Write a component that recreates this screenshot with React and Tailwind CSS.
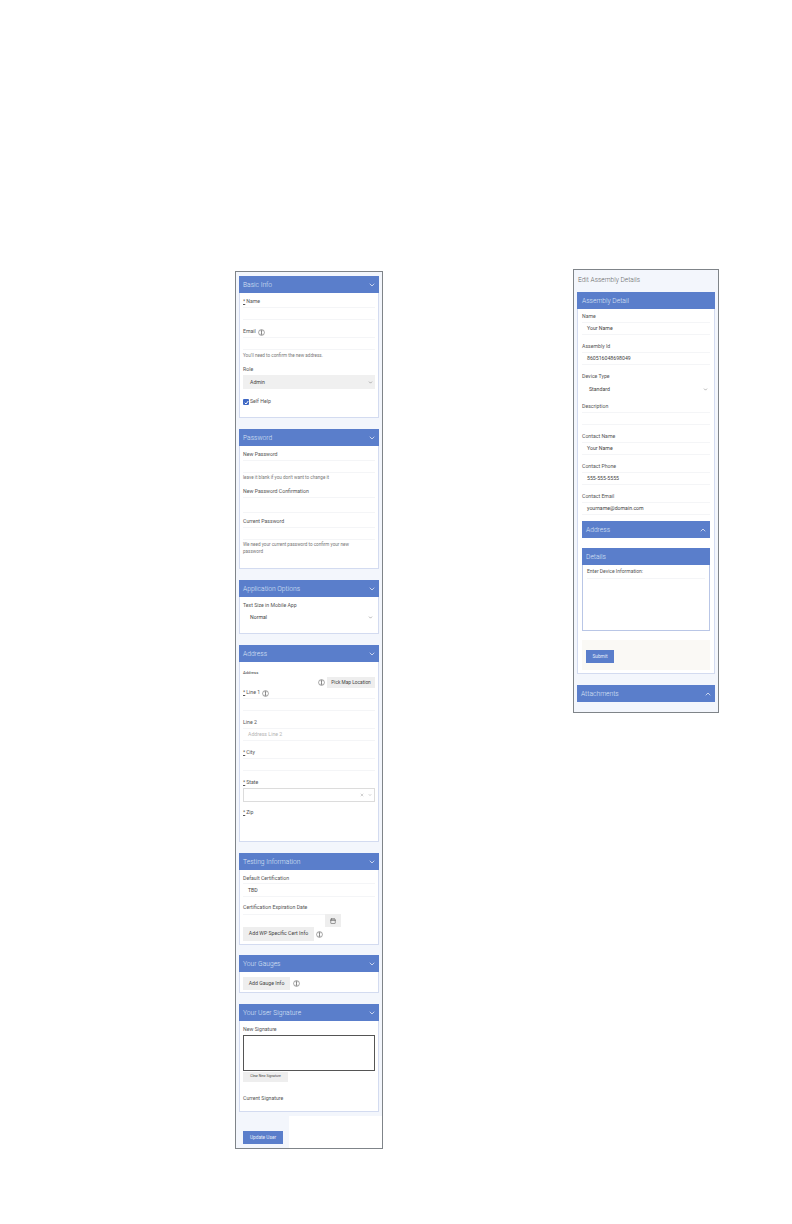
import React from 'react';
import { ChevronDown, ChevronUp, Calendar, X } from 'lucide-react';

const InfoIcon = ({ className = '' }) => (
    <svg className={className} viewBox="0 0 12 12" fill="none" stroke="#444" strokeWidth="0.8">
        <circle cx="6" cy="6" r="5" />
        <path d="M4.5 3h3M4.5 9h3M6 3v6" strokeWidth="1" />
    </svg>
);

const Req = () => <span className="underline mr-[1px]">*</span>;

const Label = ({ children, required, info }) => (
    <div className="h-[10px] pt-[2px] flex items-center text-[5.2px] text-[#555]">
        {required && <Req />}
        <span>{children}</span>
        {info && <InfoIcon className="w-[7px] h-[7px] ml-[2px]" />}
    </div>
);

const Input = ({ value, placeholder, className = '' }) => (
    <div className={`mt-[1px] h-[13px] pt-[1px] flex items-center pl-[5px] border-t border-b border-[#f4f5f7] text-[5.2px] text-[#444] ${className}`}>
        {value}
        {placeholder && <span className="text-[#b5b5b5]">{placeholder}</span>}
    </div>
);

const Field = ({ label, required, info, value, placeholder, className = 'mb-[6px]' }) => (
    <div className={className}>
        <Label required={required} info={info}>{label}</Label>
        <Input value={value} placeholder={placeholder} />
    </div>
);

const Hint = ({ children, className = '' }) => (
    <div className={`text-[4.6px] leading-[7px] text-[#777] ${className}`}>{children}</div>
);

const Header = ({ title, up, plain, className = '' }) => (
    <div className={`h-[17px] pt-[1px] bg-[#5a7ecb] flex items-center justify-between pl-[4px] pr-[3px] text-[6.7px] font-light text-[#dfe6f6] ${className}`}>
        <span>{title}</span>
        {!plain && (up ? <ChevronUp className="w-[8px] h-[8px] text-white" /> : <ChevronDown className="w-[8px] h-[8px] text-white" />)}
    </div>
);

const Section = ({ title, children, className = 'mb-[11px]', bodyClass = '' }) => (
    <section className={className}>
        <Header title={title} />
        <div className={`bg-white border border-t-0 border-[#d3dbf0] px-[3px] ${bodyClass}`}>{children}</div>
    </section>
);

const Select = ({ value, className = '' }) => (
    <div className={`h-[14px] pt-[1px] flex items-center justify-between pl-[7px] pr-[2px] text-[5.2px] text-[#444] ${className}`}>
        <span>{value}</span>
        <ChevronDown className="w-[5px] h-[5px] text-[#555]" />
    </div>
);

const GrayButton = ({ children, className = '' }) => (
    <button className={`flex items-center justify-center bg-[#eeeeee] text-[#444] ${className}`}>{children}</button>
);

const UserForm = () => (
    <div className="w-[148px] mt-[2px] h-[878px] border border-[#7f8489] bg-[#f3f6fc] pl-[3px] pt-[4px] flex flex-col">
        <div className="pr-[3px]">
            <Section title="Basic Info" bodyClass="pt-[3px] h-[125px]">
                <Field label="Name" required />
                <Label info>Email</Label>
                <Input />
                <Hint className="mt-[2px]">You'll need to confirm the new address.</Hint>
                <div className="mt-[5px]">
                    <Label>Role</Label>
                    <Select value="Admin" className="mt-[1px] bg-[#f0f0f0]" />
                </div>
                <label className="mt-[9px] h-[8px] flex items-center gap-[1px] text-[5.2px] text-[#555]">
                    <span className="w-[6px] h-[6px] rounded-[1px] bg-[#3f68c4] flex items-center justify-center">
                        <svg className="w-[5px] h-[5px]" viewBox="0 0 10 10" fill="none" stroke="white" strokeWidth="2"><path d="M1.5 5.5 4 8l4.5-6" /></svg>
                    </span>
                    Self Help
                </label>
            </Section>

            <Section title="Password" bodyClass="pt-[3px] h-[123px]">
                <Label>New Password</Label>
                <Input />
                <Hint className="mt-[1px]">leave it blank if you don't want to change it</Hint>
                <div className="mt-[5px]">
                    <Label>New Password Confirmation</Label>
                    <Input className="h-[16px]" />
                </div>
                <div className="mt-[3px]">
                    <Label>Current Password</Label>
                    <Input />
                </div>
                <Hint className="mt-[1px] w-[115px]">We need your current password to confirm your new password</Hint>
            </Section>

            <Section title="Application Options" bodyClass="pt-[3px] h-[37px]">
                <Label>Text Size in Mobile App</Label>
                <Select value="Normal" />
            </Section>

            <Section title="Address" bodyClass="pt-[8px] h-[180px]">
                <div className="h-[7px] flex items-center text-[4.2px] text-[#444]">Address</div>
                <div className="h-[11px] flex items-center justify-end gap-[2px]">
                    <InfoIcon className="w-[7px] h-[7px]" />
                    <GrayButton className="w-[48px] h-[11px] text-[4.8px]">Pick Map Location</GrayButton>
                </div>
                <Field label="Line 1" required info className="mb-[6px] -mt-[1px]" />
                <Field label="Line 2" placeholder="Address Line 2" />
                <Field label="City" required />
                <Label required>State</Label>
                <div className="mt-[1px] h-[14px] border border-[#dcdcdc] flex items-center justify-end gap-[4px] pr-[2px]">
                    <X className="w-[4px] h-[4px] text-[#777]" />
                    <ChevronDown className="w-[4px] h-[4px] text-[#777]" />
                </div>
                <div className="mt-[5px]">
                    <Label required>Zip</Label>
                </div>
            </Section>

            <Section title="Testing Information" className="mb-[10px]" bodyClass="pt-[3px] h-[75px]">
                <Label>Default Certification</Label>
                <Input value="TBD" className="!mt-0 h-[14px]" />
                <div className="mt-[5px]">
                    <Label>Certification Expiration Date</Label>
                </div>
                <div className="mt-[2px] flex">
                    <div className="w-[82px] h-[13px] border-t border-[#f4f5f7]" />
                    <GrayButton className="w-[16px] h-[13px]"><Calendar className="w-[6px] h-[6px]" /></GrayButton>
                </div>
                <div className="flex items-center gap-[2px]">
                    <GrayButton className="w-[71px] h-[14px] text-[5.2px]">Add WP Specific Cert Info</GrayButton>
                    <InfoIcon className="w-[7px] h-[7px]" />
                </div>
            </Section>

            <Section title="Your Gauges" bodyClass="pt-[5px] h-[21px]">
                <div className="flex items-center gap-[3px]">
                    <GrayButton className="w-[47px] h-[13px] text-[5.2px]">Add Gauge Info</GrayButton>
                    <InfoIcon className="w-[7px] h-[7px]" />
                </div>
            </Section>

            <Section title="Your User Signature" className="mb-0" bodyClass="pt-[3px] h-[91px]">
                <Label>New Signature</Label>
                <div className="mt-[1px] h-[36px] border border-[#555] bg-white" />
                <GrayButton className="w-[45px] h-[10px] text-[3.4px] mt-[1px]">Clear New Signature</GrayButton>
                <div className="mt-[11px]">
                    <Label>Current Signature</Label>
                </div>
            </Section>
        </div>

        {/* bottom bar: only the left part keeps the page tint */}
        <div className="mt-[4px] flex-1 flex">
            <div className="w-[50px] pt-[15px] pl-[4px]">
                <button className="block w-[40px] h-[13px] bg-[#5a7ecb] text-[4.8px] text-[#e6ecf9]">Update User</button>
            </div>
            <div className="flex-1 bg-white" />
        </div>
    </div>
);

const AssemblyForm = () => (
    <div className="w-[146px] h-[444px] border border-[#7f8489] bg-[#f3f6fc] px-[3px] flex flex-col">
        <div className="h-[22px] flex items-center pl-[1px] text-[6.6px] font-light text-[#666]">Edit Assembly Details</div>
        <div className="h-[382px] bg-white border border-t-0 border-[#d3dbf0] flex flex-col">
            <Header title="Assembly Detail" className="-mx-[1px] pl-[5px]" plain />
            <div className="pt-[2px] px-[4px]">
                <Field label="Name" value="Your Name" />
                <Field label="Assembly Id" value="860516048698049" />
                <div className="mb-[5px]">
                    <Label>Device Type</Label>
                    <Select value="Standard" className="mt-[1px]" />
                </div>
                <Field label="Description" />
                <Field label="Contact Name" value="Your Name" />
                <Field label="Contact Phone" value="555-555-5555" />
                <Field label="Contact Email" value="yourname@domain.com" className="mb-[6px]" />
                <Header title="Address" up />
                <div className="mt-[10px] h-[83px] border border-t-0 border-[#b9c6e6]">
                    <Header title="Details" className="-mx-[1px]" plain />
                    <div className="px-[4px]">
                        <div className="h-[13px] flex items-center text-[5px] text-[#555]">Enter Device Information:</div>
                        <div className="h-[42px] border-t border-[#f4f5f7]" />
                    </div>
                </div>
                <div className="mt-[9px] h-[30px] bg-[#faf9f5] pl-[4px] pt-[10px]">
                    <button className="block w-[28px] h-[13px] bg-[#5a7ecb] text-[4.8px] text-[#e6ecf9]">Submit</button>
                </div>
            </div>
        </div>
        <Header title="Attachments" up className="mt-[11px]" />
    </div>
);

export default function App() {
    return (
        <div className="w-[792px] h-[1224px] bg-white flex items-start gap-[190px] pl-[235px] pt-[269px] font-['Roboto',sans-serif]">
            <UserForm />
            <AssemblyForm />
        </div>
    );
}
